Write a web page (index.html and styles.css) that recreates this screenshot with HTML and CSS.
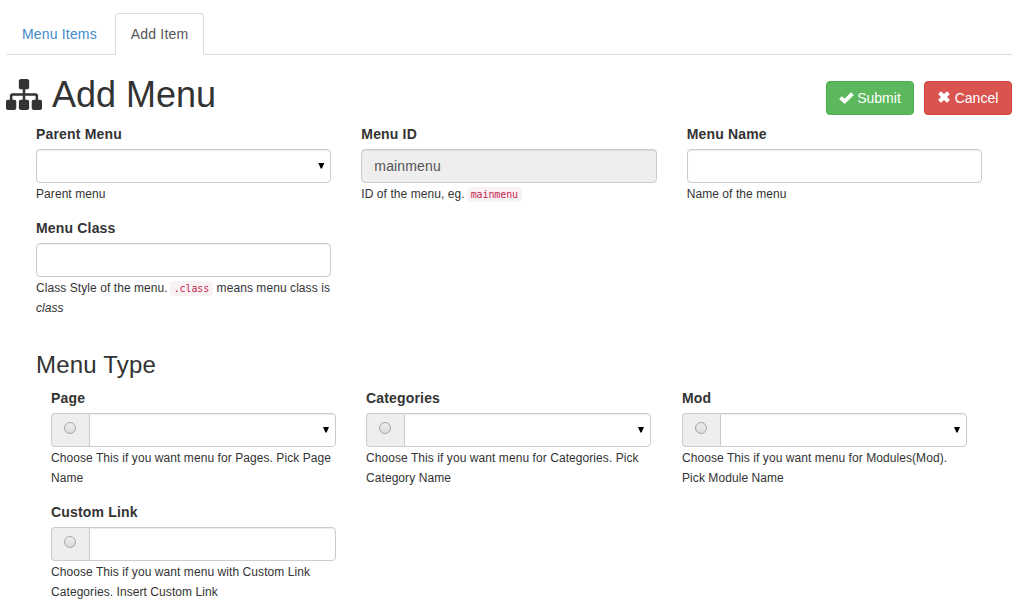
FILE: index.html
```html
<!DOCTYPE html>
<html lang="en">
<head>
<meta charset="utf-8">
<title>Add Menu</title>
<link rel="stylesheet" href="styles.css">
</head>
<body>
<ul class="tabs">
  <li><a class="tab" href="#">Menu Items</a></li>
  <li><a class="tab active" href="#">Add Item</a></li>
</ul>
<header class="page-head">
  <h1 class="title">
    <svg class="sitemap" viewBox="0 128 1792 1536"><path d="M1792 1248v320q0 40-28 68t-68 28h-320q-40 0-68-28t-28-68v-320q0-40 28-68t68-28h96v-192h-512v192h96q40 0 68 28t28 68v320q0 40-28 68t-68 28h-320q-40 0-68-28t-28-68v-320q0-40 28-68t68-28h96v-192h-512v192h96q40 0 68 28t28 68v320q0 40-28 68t-68 28h-320q-40 0-68-28t-28-68v-320q0-40 28-68t68-28h96v-192q0-52 38-90t90-38h512v-192h-96q-40 0-68-28t-28-68v-320q0-40 28-68t68-28h320q40 0 68 28t28 68v320q0 40-28 68t-68 28h-96v192h512q52 0 90 38t38 90v192h96q40 0 68 28t28 68z"/></svg>
    <span class="title-text">Add Menu</span>
  </h1>
  <div class="actions">
    <button class="btn submit"><svg class="check" viewBox="0 0 15 12"><path d="M0.2 7 L2.8 4.3 L5.5 6.7 L12 0.2 L14.8 2.9 L5.7 12 Z"/></svg><span>Submit</span></button>
    <button class="btn cancel"><svg class="cross" viewBox="0 0 12 12"><path d="M3 0.2 L6 3 L9 0.2 L11.9 3 L9 6 L11.9 9 L9 11.8 L6 9 L3 11.8 L0.1 9 L3 6 L0.1 3 Z"/></svg><span>Cancel</span></button>
  </div>
</header>
<form>
  <div class="grid details">
    <div class="field"><label class="label">Parent Menu</label><div class="control select"></div><p class="help">Parent menu</p></div>
    <div class="field"><label class="label">Menu ID</label><input class="control" value="mainmenu" disabled><p class="help">ID of the menu, eg. <code class="code">mainmenu</code></p></div>
    <div class="field"><label class="label">Menu Name</label><input class="control"><p class="help">Name of the menu</p></div>
    <div class="field"><label class="label">Menu Class</label><input class="control"><p class="help">Class Style of the menu. <code class="code">.class</code> means menu class is<br><em>class</em></p></div>
  </div>
  <h3 class="subtitle"><span>Menu Type</span></h3>
  <div class="grid types">
    <div class="field"><label class="label">Page</label><div class="group"><span class="addon"><i class="radio"></i></span><div class="control select"></div></div><p class="help">Choose This if you want menu for Pages. Pick Page<br>Name</p></div>
    <div class="field"><label class="label">Categories</label><div class="group"><span class="addon"><i class="radio"></i></span><div class="control select"></div></div><p class="help">Choose This if you want menu for Categories. Pick<br>Category Name</p></div>
    <div class="field"><label class="label">Mod</label><div class="group"><span class="addon"><i class="radio"></i></span><div class="control select"></div></div><p class="help">Choose This if you want menu for Modules(Mod).<br>Pick Module Name</p></div>
    <div class="field"><label class="label">Custom Link</label><div class="group"><span class="addon"><i class="radio"></i></span><input class="control"></div><p class="help">Choose This if you want menu with Custom Link<br>Categories. Insert Custom Link</p></div>
  </div>
</form>
</body>
</html>
```
FILE: styles.css
```css
* { box-sizing: border-box; }
body {
  margin: 0;
  padding: 13px 11px 0 6px;
  background: #fff;
  color: #333;
  font: 14px/20px "Liberation Sans", Arial, sans-serif;
  overflow: hidden;
}
.tabs {
  display: flex;
  gap: 2px;
  height: 42px;
  margin: 0;
  padding: 0;
  list-style: none;
  border-bottom: 1px solid #ddd;
}
.tab {
  display: block;
  height: 42px;
  padding: 10px 15px;
  border: 1px solid transparent;
  border-radius: 4px 4px 0 0;
  color: #428bca;
  text-decoration: none;
  letter-spacing: 0.17px;
}
.tab.active {
  color: #555;
  background: #fff;
  border-color: #ddd #ddd transparent;
}
.page-head {
  display: flex;
  justify-content: space-between;
  height: 69px;
}
.title {
  display: flex;
  gap: 10px;
  margin: 20px 0 0;
  font-size: 36px;
  font-weight: 400;
  line-height: 40px;
}
.sitemap { width: 36px; height: 31px; margin-top: 4px; fill: #333; }
.actions { display: flex; gap: 10px; padding-top: 26px; }
.btn {
  display: flex;
  align-items: center;
  justify-content: center;
  width: 88px;
  height: 34px;
  padding: 0;
  border: 1px solid;
  border-radius: 4px;
  color: #fff;
  font: inherit;
}
.btn svg { fill: #fff; }
.submit { background: #5cb85c; border-color: #4cae4c; }
.cancel { background: #d9534f; border-color: #d43f3a; }
.check { width: 15px; height: 12px; margin-right: 3px; }
.cross { width: 12px; height: 12px; margin: 0 5px 2px 0; }
.grid { display: grid; grid-template-columns: repeat(3, 1fr); }
.details { margin: 0 15px; row-gap: 14px; }
.types {
  grid-template-columns: 315px 316px 315px;
  margin: 0 30px;
  row-gap: 14px;
}
.field { padding: 0 15px; }
.types .field { width: 315px; }
.label {
  display: block;
  margin-bottom: 5px;
  font-weight: 700;
  letter-spacing: 0.17px;
}
.control {
  display: block;
  width: 100%;
  height: 34px;
  padding: 6px 12px;
  border: 1px solid #ccc;
  border-radius: 4px;
  background: #fff;
  box-shadow: inset 0 1px 1px rgba(0, 0, 0, 0.075);
  color: #555;
  font: inherit;
  letter-spacing: 0.15px;
}
.control:disabled { background: #eee; }
.select {
  display: flex;
  align-items: center;
  justify-content: flex-end;
  padding: 0 6px 0 0;
}
.select::after {
  content: "";
  width: 6px;
  height: 6px;
  background: #000;
  clip-path: polygon(0 0, 100% 0, 60% 90%, 40% 90%);
}
.help {
  margin: 0;
  padding-top: 1px;
  font-size: 12px;
  line-height: 20px;
  letter-spacing: 0.07px;
  white-space: nowrap;
}
.code {
  margin-left: -1.5px;
  padding: 2px 4px;
  border-radius: 4px;
  background: #f9f2f4;
  color: #c7254e;
  font: 10px/14px "DejaVu Sans Mono", monospace;
  letter-spacing: -0.1px;
}
.subtitle {
  margin: 34px 30px 10px;
  font-size: 24px;
  font-weight: 400;
  line-height: 26px;
  letter-spacing: 0.2px;
}
.group { display: flex; }
.addon {
  display: flex;
  flex: none;
  width: 38px;
  height: 34px;
  padding: 8px 0 0 12px;
  border: 1px solid #ccc;
  border-right: 0;
  border-radius: 4px 0 0 4px;
  background: #eee;
}
.group .control { border-radius: 0 4px 4px 0; }
.radio {
  width: 12px;
  height: 12px;
  border: 1px solid #a6a6a6;
  border-radius: 50%;
  background: linear-gradient(#ededed, #dcdcdc);
}
```
